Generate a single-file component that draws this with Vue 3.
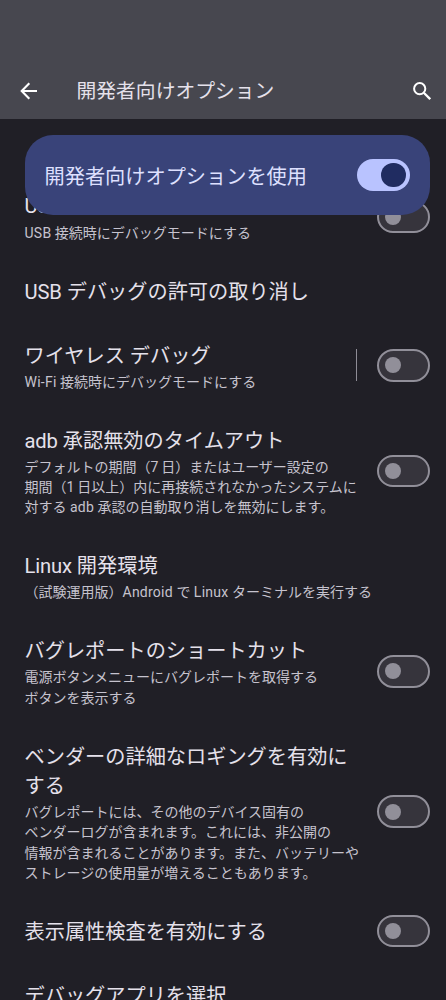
<script setup>
const rows = [
  { title: ['USB デバッグ'], sub: ['USB 接続時にデバッグモードにする'], toggle: true },
  { title: ['USB デバッグの許可の取り消し'] },
  { title: ['ワイヤレス デバッグ'], sub: ['Wi-Fi 接続時にデバッグモードにする'], toggle: true, divider: true },
  {
    title: ['adb 承認無効のタイムアウト'],
    sub: [
      'デフォルトの期間（7 日）またはユーザー設定の',
      '期間（1 日以上）内に再接続されなかったシステムに',
      '対する adb 承認の自動取り消しを無効にします。',
    ],
    toggle: true,
  },
  { title: ['Linux 開発環境'], sub: ['（試験運用版）Android で Linux ターミナルを実行する'] },
  {
    title: ['バグレポートのショートカット'],
    sub: ['電源ボタンメニューにバグレポートを取得する', 'ボタンを表示する'],
    toggle: true,
  },
  {
    title: ['ベンダーの詳細なロギングを有効に', 'する'],
    sub: [
      'バグレポートには、その他のデバイス固有の',
      'ベンダーログが含まれます。これには、非公開の',
      '情報が含まれることがあります。また、バッテリーや',
      'ストレージの使用量が増えることもあります。',
    ],
    toggle: true,
  },
  { title: ['表示属性検査を有効にする'], toggle: true },
  { title: ['デバッグアプリを選択'] },
]

// Splits a line into Latin, digit and Japanese runs so each can be tracked separately.
const runs = (line) =>
  line
    .split(/([A-Za-z-]+|\d+)/)
    .filter(Boolean)
    .map((text) => ({ text, kind: /^[A-Za-z]/.test(text) ? 'latin' : /^\d/.test(text) ? 'digit' : 'kana' }))
</script>

<template>
  <div class="screen">
    <header class="bar">
      <svg class="back" viewBox="0 0 18 18" width="18" height="18">
        <path d="M17 9H2.2M9.3 1.2L1.7 9L9.3 16.8" fill="none" stroke="currentColor" stroke-width="2.1" />
      </svg>
      <h1>開発者向けオプション</h1>
      <svg class="search" viewBox="0 0 18 18" width="18" height="18">
        <circle cx="6.7" cy="6.7" r="5.6" fill="none" stroke="currentColor" stroke-width="2" />
        <path d="M10.8 10.8L17.2 17.2" fill="none" stroke="currentColor" stroke-width="2.3" />
      </svg>
    </header>
    <main class="content">
      <div class="list">
        <div v-for="(row, i) in rows" :key="i" class="row">
          <div class="text">
            <div v-for="line in row.title" :key="line" class="title"><span v-for="(r, k) in runs(line)" :key="k" :class="r.kind">{{ r.text }}</span></div>
            <div v-if="row.sub" class="sub">
              <div v-for="line in row.sub" :key="line"><span v-for="(r, k) in runs(line)" :key="k" :class="r.kind">{{ r.text }}</span></div>
            </div>
          </div>
          <span v-if="row.divider" class="divider"></span>
          <span v-if="row.toggle" class="switch"><i></i></span>
        </div>
      </div>
      <div class="banner">
        <span>開発者向けオプションを使用</span>
        <span class="switch on"><i></i></span>
      </div>
    </main>
  </div>
</template>

<style>
body {
  background: #201f26;
}
</style>

<style scoped>
.screen {
  height: 1000px;
  display: flex;
  flex-direction: column;
  overflow: hidden;
  background: #201f26;
  color: #e5e1eb;
  font-family: Roboto, "Noto Sans CJK JP", sans-serif;
}
.bar {
  box-sizing: border-box;
  flex: none;
  height: 119px;
  padding: 62px 15.5px 0 19.5px;
  display: flex;
  align-items: center;
  background: #47474f;
}
.bar svg {
  flex: none;
  color: #fff;
}
h1 {
  flex: 1;
  margin: 0 0 0 39px;
  padding-top: 2px;
  font-size: 19.8px;
  font-weight: 400;
  line-height: 30px;
}
.content {
  position: relative;
  flex: 1;
  overflow: hidden;
}
.list {
  padding-top: 55.3px;
}
.row {
  display: flex;
  align-items: center;
  padding: 17.15px 16.5px 17.15px 24.5px;
}
.text {
  flex: 1;
  padding-top: 1.6px;
  margin-bottom: -1.6px;
  white-space: nowrap;
}
.title {
  font-size: 20.2px;
  line-height: 29.3px;
}
.title .latin {
  letter-spacing: -0.15px;
}
.sub {
  margin: 0.7px 0 0.5px;
  font-size: 14px;
  line-height: 20.3px;
  color: #c6c3ce;
}
.row:first-child .title {
  margin-top: -1px;
}
.row:first-child .sub {
  margin-top: 1.7px;
}
.sub .latin {
  letter-spacing: 0.25px;
}
.sub .digit {
  letter-spacing: -0.7px;
}
.divider {
  width: 1px;
  height: 32px;
  margin-right: 20px;
  background: #8e8c96;
}
.switch {
  box-sizing: border-box;
  flex: none;
  display: flex;
  align-items: center;
  width: 52.5px;
  height: 32.5px;
  margin: -2px 0;
  padding-left: 6px;
  border: 2px solid #918f99;
  border-radius: 17px;
  background: #36343c;
}
.switch i {
  width: 16px;
  height: 16px;
  border-radius: 50%;
  background: #918f99;
}
.switch.on {
  justify-content: flex-end;
  padding: 0 4px 0 0;
  border: 0;
  background: #b9c3ff;
}
.switch.on i {
  width: 24.5px;
  height: 24.5px;
  background: #202c61;
}
.banner {
  position: absolute;
  box-sizing: border-box;
  top: 16px;
  left: 24.5px;
  right: 16.5px;
  height: 80.4px;
  padding: 0 20px;
  display: flex;
  align-items: center;
  justify-content: space-between;
  border-radius: 28px;
  background: #394379;
  color: #dee0ff;
  font-size: 20.2px;
}
</style>
